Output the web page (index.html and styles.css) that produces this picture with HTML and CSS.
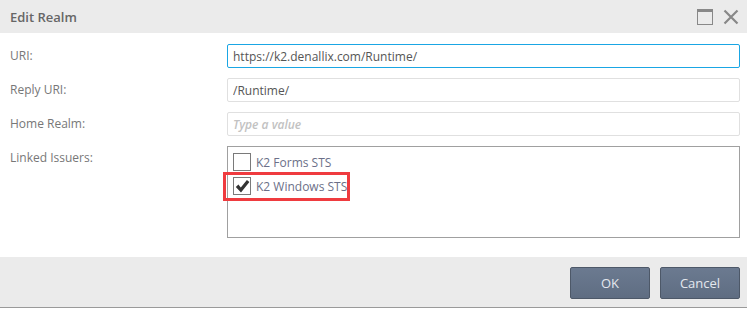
FILE: index.html
```html
<!DOCTYPE html>
<html lang="en">
<head>
    <meta charset="UTF-8">
    <meta name="viewport" content="width=device-width, initial-scale=1.0">
    <title>Edit Realm</title>
    <link rel="stylesheet" href="styles.css">
</head>
<body>
    <div class="dialog">
        <!-- Header -->
        <div class="dialog-header">
            <span class="dialog-title">Edit Realm</span>
            <div class="header-tools">
                <svg class="tool-icon" width="16" height="16" viewBox="0 0 16 16">
                    <rect x="0.5" y="0.5" width="15" height="15" fill="none" stroke="#888" stroke-width="1"/>
                    <rect x="0" y="0" width="16" height="3" fill="#888"/>
                </svg>
                <svg class="tool-icon" width="16" height="16" viewBox="0 0 16 16">
                    <path d="M1.5 1.5 L14.5 14.5 M14.5 1.5 L1.5 14.5" stroke="#888" stroke-width="2.2" fill="none"/>
                </svg>
            </div>
        </div>

        <!-- Form -->
        <div class="dialog-body">
            <div class="form-row">
                <label class="form-label">URI:</label>
                <input class="form-input focused" type="text" value="https://k2.denallix.com/Runtime/">
            </div>
            <div class="form-row">
                <label class="form-label">Reply URI:</label>
                <input class="form-input" type="text" value="/Runtime/">
            </div>
            <div class="form-row">
                <label class="form-label">Home Realm:</label>
                <input class="form-input" type="text" placeholder="Type a value">
            </div>
            <div class="form-row">
                <label class="form-label">Linked Issuers:</label>
                <div class="issuer-list">
                    <div class="issuer-item">
                        <span class="check-box"></span>
                        <span class="issuer-name">K2 Forms STS</span>
                    </div>
                    <div class="issuer-item">
                        <span class="check-box">
                            <svg width="15" height="15" viewBox="0 0 15 15">
                                <path d="M0.8 8 L3.4 5.6 L5.8 8.6 L11.9 0.9 L14.4 3.1 L6 13.6 Z" fill="#333"/>
                            </svg>
                        </span>
                        <span class="issuer-name">K2 Windows STS</span>
                        <span class="highlight"></span>
                    </div>
                </div>
            </div>
        </div>

        <!-- Footer -->
        <div class="dialog-footer">
            <button class="btn">OK</button>
            <button class="btn">Cancel</button>
        </div>
    </div>
</body>
</html>
```

FILE: styles.css
```css
/* General Styles */
body {
    font-family: 'Open Sans', 'Liberation Sans', sans-serif;
    margin: 0;
    padding: 0;
    background-color: #fff;
}

.dialog {
    width: 747px;
}

/* Header Styles */
.dialog-header {
    height: 33px;
    background-color: #ebebeb;
    display: flex;
    justify-content: space-between;
    align-items: center;
    padding: 0 8px 0 10px;
}

.dialog-title {
    font-size: 13px;
    font-weight: 600;
    color: #666;
}

.header-tools {
    display: flex;
    gap: 10px;
    align-items: center;
}

.tool-icon {
    display: block;
}

/* Form Styles */
.dialog-body {
    padding: 11px 7px 19px 10px;
    display: flex;
    flex-direction: column;
    gap: 10px;
}

.form-row {
    display: flex;
    align-items: flex-start;
}

.form-label {
    width: 217px;
    flex-shrink: 0;
    font-size: 12px;
    color: #777;
    line-height: 24px;
}

.form-input {
    flex: 1;
    box-sizing: border-box;
    height: 24px;
    margin: 0;
    padding: 0 5px;
    border: 1px solid #e0e0e0;
    border-radius: 2px;
    font-family: 'Open Sans', 'Liberation Sans', sans-serif;
    font-size: 12px;
    color: #555;
    outline: none;
}

.form-input.focused {
    border-color: #1aa6e4;
}

.form-input::placeholder {
    color: #c2c2c2;
    font-style: italic;
    font-weight: 600;
}

/* Issuer List Styles */
.issuer-list {
    flex: 1;
    box-sizing: border-box;
    height: 92px;
    border: 1px solid #a0a0a0;
    padding: 6px 5px;
    display: flex;
    flex-direction: column;
    gap: 6px;
}

.issuer-item {
    position: relative;
    display: flex;
    align-items: center;
    gap: 5px;
    height: 18px;
}

.check-box {
    box-sizing: border-box;
    width: 18px;
    height: 18px;
    border: 1px solid #7a7a7a;
    background-color: #fff;
    display: flex;
    align-items: center;
    justify-content: center;
}

.issuer-name {
    font-size: 12px;
    color: #6b6f88;
}

/* Annotation around the checked issuer */
.highlight {
    position: absolute;
    left: -10px;
    top: -5px;
    width: 127px;
    height: 29px;
    box-sizing: border-box;
    border: 3px solid #ef3b3f;
}

/* Footer Styles */
.dialog-footer {
    height: 51px;
    box-sizing: border-box;
    background-color: #ebebeb;
    border-bottom: 1px solid #9a9a9a;
    display: flex;
    justify-content: flex-end;
    align-items: flex-start;
    gap: 10px;
    padding: 10px 7px 0 0;
}

.btn {
    width: 80px;
    height: 32px;
    border: 1px solid #4d5868;
    border-radius: 2px;
    background: linear-gradient(#6b7a90, #5f6d82);
    color: #e4e8ee;
    font-family: 'Open Sans', 'Liberation Sans', sans-serif;
    font-size: 13px;
    cursor: pointer;
}
```
